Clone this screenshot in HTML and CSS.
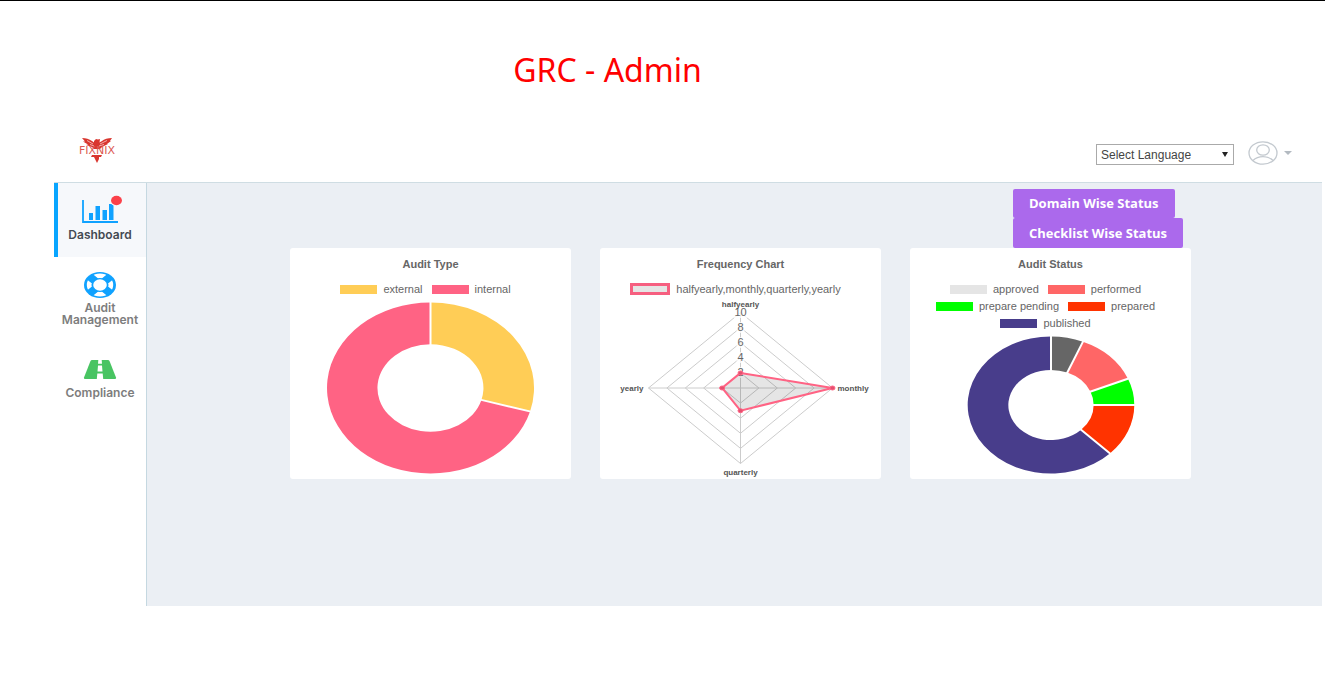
FILE: index.html
```html
<!DOCTYPE html>
<html lang="en">
<head>
<meta charset="utf-8">
<meta name="viewport" content="width=device-width, initial-scale=1">
<title>GRC - Admin</title>
<link rel="stylesheet" href="styles.css">
</head>
<body>
<h1 class="page-title">GRC - Admin</h1>
<div class="app">
  <header class="topbar">
    <a class="logo" href="#" aria-label="Fixnix home">
      <svg width="48" height="32" viewBox="0 0 48 32">
        <g fill="#d9362f">
          <path d="M9 1 C13 1 16 2 19 4 L21 5.500 L21 4 L23 2 L25 2.500 L27 2 L26.500 5.500 L29 4 C31 2 35 1 39 1 L37 4 L38 4 L34 7 L35 7 L29 10 L27 12 L21 12 L19 10 L13 8 L15 7.500 L10 4.500 L12 4.500 Z"/>
          <path d="M19 18 L29 18 L28 20 L26 20 L26 22 L24 26 L22 22 L21 20 L18 20 Z"/>
        </g>
        <path d="M14 3.500 L20 7 M34 3.500 L27 7 M17 7.500 L21 9 M31 7.500 L26 9" stroke="#fff" stroke-width=".6"/>
        <text class="logo-text" x="24" y="17" text-anchor="middle">FIXNIX</text>
      </svg>
    </a>
    <div class="tools">
      <label class="language">
        <select aria-label="Language"><option>Select Language</option></select>
        <svg class="language-arrow" width="6" height="5" viewBox="0 0 6 5"><path d="M0 0H6L3 5Z" fill="#222"/></svg>
      </label>
      <button class="account" type="button" aria-label="Account">
        <svg width="30" height="24" viewBox="0 0 30 24" fill="none" stroke="#c3c9cf" stroke-width="1.300">
          <ellipse cx="15" cy="12" rx="14" ry="11.200"/>
          <ellipse cx="15" cy="9" rx="6.300" ry="5.200"/>
          <path d="M5 19.500 C8 16.500 11.500 15.600 15 15.600 C18.500 15.600 22 16.500 25 19.500"/>
        </svg>
        <svg width="8" height="4" viewBox="0 0 8 4"><path d="M0 0H8L4 4Z" fill="#b3bac1"/></svg>
      </button>
    </div>
  </header>
  <div class="body">
    <nav class="sidebar">
      <a class="nav-item active" href="#">
        <svg width="40" height="28" viewBox="0 0 40 28">
          <path d="M3 4V26H38" fill="none" stroke="#10a2ff" stroke-width="1.800"/>
          <path d="M9 17h4v7h-4zM15.500 10h4.500v14h-4.500zM22.500 14h4.500v10h-4.500zM29 8h4.500v16h-4.500z" fill="#10a2ff"/>
          <ellipse cx="36.500" cy="4.500" rx="6.500" ry="5.700" fill="#f6f8fb"/>
          <ellipse cx="36.500" cy="4.500" rx="5.500" ry="4.700" fill="#fb414a"/>
        </svg>
        <span>Dashboard</span>
      </a>
      <a class="nav-item" href="#">
        <svg width="32" height="26" viewBox="0 0 32 26">
          <ellipse cx="16" cy="13" rx="16" ry="13" fill="#10a2ff"/>
          <ellipse cx="16" cy="13" rx="10.700" ry="8.900" fill="none" stroke="#fff" stroke-width="5"/>
          <path d="M5.500 4.500 L26.500 21.500 M26.500 4.500 L5.500 21.500" stroke="#10a2ff" stroke-width="8"/>
          <ellipse cx="16" cy="13" rx="8.500" ry="7" fill="#10a2ff"/>
          <ellipse cx="16" cy="13" rx="6.800" ry="5.700" fill="#fff"/>
        </svg>
        <span>Audit Management</span>
      </a>
      <a class="nav-item last" href="#">
        <svg width="32" height="19" viewBox="0 0 32 19">
          <path d="M8 0H24Q25 0 25.500 1L32 17.500Q32.300 19 31 19H1Q-.3 19 0 17.500L6.500 1Q7 0 8 0Z" fill="#48c462"/>
          <path d="M14.300 0H17.700L18 3.800H14ZM14 5.500H18L18.500 11.500H13.500ZM13.300 13.500H18.700L19.200 19H12.800Z" fill="#fff"/>
        </svg>
        <span>Compliance</span>
      </a>
    </nav>
    <main class="content">
      <div class="actions">
        <button type="button">Domain Wise Status</button>
        <button type="button">Checklist Wise Status</button>
      </div>
      <div class="cards">
        <section class="card">
          <h2>Audit Type</h2>
          <ul class="legend">
            <li><i class="swatch yellow"></i>external</li>
            <li><i class="swatch pink"></i>internal</li>
          </ul>
          <svg class="chart" viewBox="0 0 281 182" role="img" aria-label="Audit type doughnut">
            <g transform="translate(140.500 91) scale(1.035 .855)">
              <path class="s-yellow" d="M0 -51.200V-100A100 100 0 0 1 96.200 27.400L49.200 14A51.200 51.200 0 0 0 0 -51.200Z"/>
              <path class="s-pink" d="M49.200 14L96.200 27.400A100 100 0 1 1 0 -100V-51.200A51.200 51.200 0 1 0 49.200 14Z"/>
              <path class="gap" d="M0 -50V-102M48 13.600L98 27.900"/>
            </g>
          </svg>
        </section>
        <section class="card">
          <h2>Frequency Chart</h2>
          <ul class="legend">
            <li><i class="swatch outlined"></i>halfyearly,monthly,quarterly,yearly</li>
          </ul>
          <svg class="chart" viewBox="0 0 281 182" role="img" aria-label="Frequency radar chart">
            <g transform="translate(140.500 91)">
              <path class="web" d="M0 -15.100L18.400 0L0 15.100L-18.400 0ZM0 -30.200L36.800 0L0 30.200L-36.800 0ZM0 -45.300L55.200 0L0 45.300L-55.200 0ZM0 -60.400L73.600 0L0 60.400L-73.600 0ZM0 -75.500L92 0L0 75.500L-92 0ZM0 -75.500V75.500M-92 0H92"/>
              <path class="backdrop" d="M-7 -82h14v12h-14zM-4 -66h8v11h-8zM-4 -51h8v11h-8zM-4 -36h8v11h-8zM-4 -21h8v11h-8z"/>
              <g class="ticks">
                <text y="-72">10</text><text y="-57">8</text><text y="-42">6</text><text y="-27">4</text><text y="-12">2</text>
              </g>
              <path class="area" d="M0 -15.100L92 0L0 22.700L-18.400 0Z"/>
              <g class="points">
                <ellipse cy="-15" rx="2.500" ry="2"/><ellipse cx="92" rx="2.500" ry="2"/><ellipse cy="22.700" rx="2.500" ry="2"/><ellipse cx="-18.400" rx="2.500" ry="2"/>
              </g>
              <g class="axis">
                <text y="-81">halfyearly</text>
                <text y="87">quarterly</text>
                <text class="start" x="97" y="3">monthly</text>
                <text class="end" x="-97" y="3">yearly</text>
              </g>
            </g>
          </svg>
        </section>
        <section class="card">
          <h2>Audit Status</h2>
          <ul class="legend">
            <li><i class="swatch light"></i>approved</li>
            <li><i class="swatch coral"></i>performed</li>
            <li><i class="swatch green"></i>prepare pending</li>
            <li><i class="swatch orange"></i>prepared</li>
            <li><i class="swatch indigo"></i>published</li>
          </ul>
          <svg class="chart" viewBox="0 0 281 148" role="img" aria-label="Audit status doughnut">
            <g transform="translate(141 74) scale(.833 .685)">
              <path class="s-gray" d="M0 -51.200V-100A100 100 0 0 1 38.300 -92.400L19.600 -47.300A51.200 51.200 0 0 0 0 -51.200Z"/>
              <path class="s-coral" d="M19.600 -47.300L38.300 -92.400A100 100 0 0 1 92.400 -38.300L47.300 -19.600A51.200 51.200 0 0 0 19.600 -47.300Z"/>
              <path class="s-green" d="M47.300 -19.600L92.400 -38.300A100 100 0 0 1 100 0H51.200A51.200 51.200 0 0 0 47.300 -19.600Z"/>
              <path class="s-orange" d="M51.200 0H100A100 100 0 0 1 70.700 70.700L36.200 36.200A51.200 51.200 0 0 0 51.200 0Z"/>
              <path class="s-indigo" d="M36.200 36.200L70.700 70.700A100 100 0 1 1 0 -100V-51.200A51.200 51.200 0 1 0 36.200 36.200Z"/>
              <path class="gap" d="M0 -50V-102M19 -46L39 -94M46 -19L94 -39M50 0H102M35 35L72 72"/>
            </g>
          </svg>
        </section>
      </div>
    </main>
  </div>
</div>
</body>
</html>
```
FILE: styles.css
```css
* { box-sizing: border-box; }
body {
  margin: 0;
  min-height: 100vh;
  background: #fff;
  border-top: 1px solid #000;
  color: #666;
  font-family: "Liberation Sans", Arial, sans-serif;
}
svg { display: block; overflow: visible; }
a { color: inherit; text-decoration: none; }
button { border: 0; font: inherit; cursor: pointer; }

.page-title {
  margin: 0;
  padding: 47px 110px 38px 0;
  color: #f00;
  font: 400 32px/44px "Noto Sans", sans-serif;
  text-align: center;
}
.app { margin: 0 3px 0 54px; }
.topbar {
  display: flex;
  align-items: center;
  justify-content: space-between;
  height: 53px;
  padding: 0 30px 6px 19px;
  border-bottom: 1px solid #cfdde3;
}
.logo-text { fill: #dc5a54; font: 11px "DejaVu Sans", sans-serif; }
.tools { display: flex; align-items: center; gap: 14px; }
.language { position: relative; display: block; }
.language select {
  display: block;
  appearance: none;
  width: 138px;
  height: 21px;
  margin-top: 3px;
  padding: 0 4px;
  border: 1px solid #aaa;
  border-radius: 0;
  background: #fff;
  color: #444;
  font: 12px "Liberation Sans", Arial, sans-serif;
}
.language-arrow { position: absolute; right: 6px; top: 11px; pointer-events: none; }
.account { display: flex; align-items: center; gap: 6px; padding: 0; background: none; }

.body { display: flex; align-items: stretch; }
.sidebar { flex: none; width: 93px; border-right: 1px solid #c5d8e1; }
.nav-item {
  display: flex;
  flex-direction: column;
  align-items: center;
  gap: 4px;
  padding: 15px 4px 14px;
  color: #7d7d7d;
  font: 600 12px/12px Inter, sans-serif;
  text-align: center;
}
.nav-item.active {
  gap: 3px;
  padding: 13px 4px 15px 0;
  border-left: 4px solid #08a5ff;
  background: #f6f8fb;
  color: #444a52;
}
.nav-item.active span { line-height: 15px; }
.nav-item.last { gap: 8px; padding-top: 20px; }

.content {
  flex: 1;
  min-width: 0;
  padding: 6px 131px 127px 143px;
  background: #ebeff4;
}
.actions { display: flex; flex-direction: column; align-items: flex-start; width: 178px; margin-left: auto; }
.actions button {
  height: 29px;
  padding: 0 16px;
  border-radius: 2px;
  background: #ab69ec;
  color: #fff;
  font: 700 13px/29px "Open Sans", sans-serif;
  white-space: nowrap;
}
.actions button + button { height: 30px; }
.cards { display: grid; grid-template-columns: repeat(3, 1fr); gap: 29px; align-items: start; }
.card { padding-top: 8px; border-radius: 3px; background: #fff; }
.card h2 { margin: 0 0 9px; font-size: 11px; line-height: 16px; text-align: center; }
.legend {
  display: flex;
  flex-wrap: wrap;
  justify-content: center;
  gap: 1px 9px;
  margin: 0;
  padding: 0 30px 0 20px;
  list-style: none;
  font-size: 11px;
  line-height: 16px;
}
.legend li { display: flex; align-items: center; gap: 6px; white-space: nowrap; }
.swatch { width: 37px; height: 9px; }
.swatch.outlined { width: 40px; height: 12px; border: 3px solid #f65f80; background: #e5e5e5; }
.yellow { background: #ffcd56; }
.pink { background: #ff6384; }
.light { background: #e5e5e5; }
.coral { background: #f66; }
.green { background: #0f0; }
.orange { background: #f30; }
.indigo { background: #483d8b; }

.chart { width: 100%; height: auto; }
.s-yellow { fill: #ffcd56; }
.s-pink { fill: #ff6384; }
.s-gray { fill: #666; }
.s-coral { fill: #f66; }
.s-green { fill: #0f0; }
.s-orange { fill: #f30; }
.s-indigo { fill: #483d8b; }
.gap { fill: none; stroke: #fff; stroke-width: 2px; vector-effect: non-scaling-stroke; }
.web { fill: none; stroke: #ccc; }
.backdrop { fill: #fff; fill-opacity: .75; }
.area { fill: rgba(0, 0, 0, .1); stroke: #ff6384; stroke-width: 2px; }
.points { fill: #e5506f; stroke: #ff6384; }
.ticks { fill: #666; font-size: 11px; text-anchor: middle; }
.axis { fill: #555; font-size: 8px; font-weight: 700; text-anchor: middle; }
.axis .start { text-anchor: start; }
.axis .end { text-anchor: end; }
```
